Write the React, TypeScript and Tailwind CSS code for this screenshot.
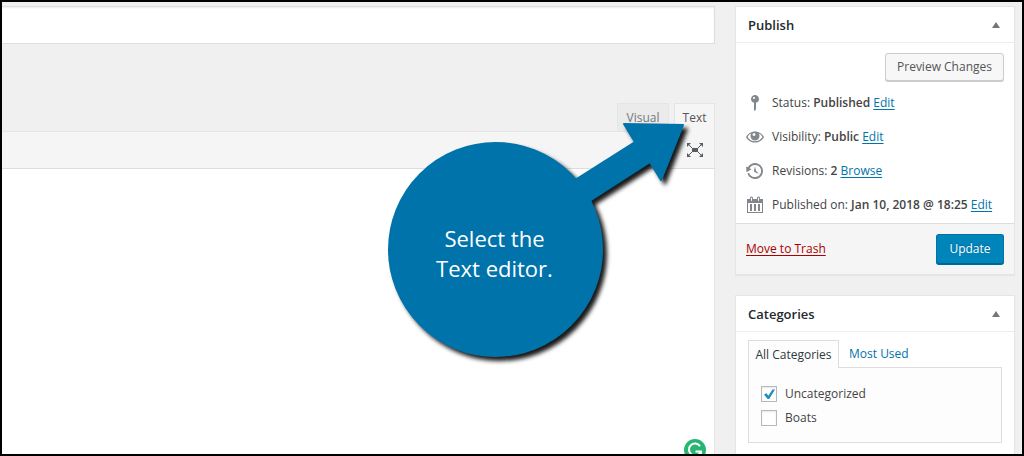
import { useState, type ReactNode } from "react";

const ICONS = {
  pin: "M14 6c0 1.86-1.28 3.41-3 3.86V16c0 1-2 2-2 2V9.86c-1.72-.45-3-2-3-3.86 0-2.21 1.79-4 4-4s4 1.79 4 4zM8 5c0 .55.45 1 1 1s1-.45 1-1-.45-1-1-1-1 .45-1 1z",
  eye: "M10 4.4C6 4.4 2.8 6.7 1 10c1.8 3.3 5 5.6 9 5.6s7.2-2.3 9-5.6C17.2 6.7 14 4.4 10 4.4zM10 14.3c-3.1 0-5.8-1.6-7.4-4.3C3.5 8.4 4.5 7.3 6 6.600A4.500 4.500 0 0 0 5.500 9a4.500 4.500 0 0 0 9 0c0-.9-.2-1.700-.6-2.400C15.500 7.300 16.500 8.400 17.400 10c-1.600 2.700-4.300 4.300-7.400 4.300zM9 6.200c.9 0 1.500.6 1.500 1.400S9.900 9 9 9s-1.500-.6-1.500-1.400S8.100 6.200 9 6.200z",
  history:
    "M13.65 2.88c3.93 2.01 5.48 6.84 3.47 10.77s-6.83 5.48-10.77 3.47c-1.87-.96-3.2-2.56-3.86-4.4l1.64-1.03c.45 1.57 1.52 2.95 3.08 3.76 3.01 1.54 6.69.35 8.23-2.66 1.55-3.01.36-6.69-2.65-8.24C9.78 3.01 6.1 4.2 4.56 7.21l1.88.97-4.95 3.08-.39-5.82 1.78.91C4.9 2.4 9.75.89 13.65 2.88zm-4.36 7.83C9.11 10.53 9 10.28 9 10c0-.07.03-.12.04-.19h-.01L10 5l.97 4.81L14 13l-4.5-2.12.02-.02c-.08-.04-.16-.09-.23-.15z",
  calendar:
    "M15 4h3v14H2V4h3V3c0-.83.67-1.5 1.5-1.5S8 2.17 8 3v1h4V3c0-.83.67-1.5 1.5-1.5S15 2.17 15 3v1zM6 3v2.5c0 .28.22.5.5.5s.5-.22.5-.5V3c0-.28-.22-.5-.5-.5S6 2.72 6 3zm7 0v2.5c0 .28.22.5.5.5s.5-.22.5-.5V3c0-.28-.22-.5-.5-.5s-.5.22-.5.5zm4 14V8H3v9h14zM7 16V9H5v7h2zm4 0V9H9v7h2zm4 0V9h-2v7h2z",
};

function MetaRow({
  icon,
  label,
  value,
  action,
}: {
  icon: keyof typeof ICONS;
  label: string;
  value: string;
  action: string;
}) {
  return (
    <li className="flex h-[34px] items-center gap-[7px] pl-[9px] whitespace-nowrap">
      <svg viewBox="0 0 20 20" className="size-5 shrink-0 fill-[#82878c]" fillRule="evenodd" aria-hidden="true">
        <path d={ICONS[icon]} />
      </svg>
      <span>
        {label} <b className="font-semibold">{value}</b>{" "}
        <a href="#" className="text-[#0073aa] underline underline-offset-2">
          {action}
        </a>
      </span>
    </li>
  );
}

function Panel({ title, children }: { title: string; children: ReactNode }) {
  return (
    <section className="border border-[#e5e5e5] bg-white shadow-[0_1px_1px_rgba(0,0,0,0.04)]">
      <header className="flex h-9 items-center justify-between border-b border-[#eee] pr-[14px] pl-3">
        <h2 className="text-[13px] leading-5 font-semibold text-[#23282d]">{title}</h2>
        <button type="button" aria-label={`Toggle panel: ${title}`}>
          <svg viewBox="0 0 8 6" className="h-[6px] w-2 fill-[#72777c]" aria-hidden="true">
            <path d="M4 0 8 6H0z" />
          </svg>
        </button>
      </header>
      {children}
    </section>
  );
}

function Category({ name, initial }: { name: string; initial: boolean }) {
  const [checked, setChecked] = useState(initial);
  return (
    <label className="flex h-6 items-center gap-2">
      <span className="grid size-4">
        <input
          type="checkbox"
          checked={checked}
          onChange={() => setChecked(!checked)}
          className="col-start-1 row-start-1 size-4 appearance-none border border-[#b4b9be] bg-white shadow-[inset_0_1px_2px_rgba(0,0,0,0.1)]"
        />
        {checked && (
          <svg
            viewBox="0 0 16 16"
            className="pointer-events-none z-10 col-start-1 row-start-1 size-4 fill-[#1e8cbe]"
            aria-hidden="true"
          >
            <path d="M3 8.500 5.500 7.300l1.800 2.400L11.500 3.500h2.500L8.200 13H6.600z" />
          </svg>
        )}
      </span>
      {name}
    </label>
  );
}

function Callout() {
  return (
    <div className="pointer-events-none absolute top-[109px] right-[15px] z-20 h-[255px] w-80">
      <svg viewBox="0 0 320 255" className="h-full w-full overflow-visible" aria-hidden="true">
        <g
          className="fill-[#0073aa] stroke-[#0073aa] drop-shadow-[4px_4px_2px_rgba(0,0,0,0.9)]"
          strokeWidth="2"
          strokeLinejoin="round"
        >
          <circle cx="115.500" cy="134.500" r="106.500" />
          <path d="M185 72 195 65 255 27 244 9 303 10 281 65 270 47 211 85 198 100z" />
        </g>
      </svg>
      <p className="absolute top-[108px] left-0 w-[229px] text-center text-[22px] leading-[30px] text-white">
        Select the
        <br />
        Text editor.
      </p>
    </div>
  );
}

function Editor() {
  return (
    <main className="relative flex min-w-0 flex-1 flex-col">
      <input
        type="text"
        aria-label="Post title"
        className="h-[38px] w-full border border-l-0 border-[#ddd] bg-white px-2 shadow-[inset_0_1px_2px_rgba(0,0,0,0.07)]"
      />
      <div role="tablist" aria-label="Editor mode" className="mt-[59px] flex justify-end gap-[5px]">
        <button
          type="button"
          role="tab"
          aria-selected="false"
          className="h-7 w-[52px] border border-b-0 border-[#e5e5e5] bg-[#ebebeb] text-[#777]"
        >
          Visual
        </button>
        <button
          type="button"
          role="tab"
          aria-selected="true"
          className="z-10 -mb-px h-[29px] w-[41px] border border-b-0 border-[#e5e5e5] bg-[#f5f5f5] text-[#555]"
        >
          Text
        </button>
      </div>
      <div className="flex h-[38px] items-center justify-end border-y border-r border-t-[#e5e5e5] border-r-[#e5e5e5] border-b-[#ddd] bg-[#f5f5f5] pr-[11px]">
        <button type="button" aria-label="Distraction-free writing mode">
          <svg viewBox="0 0 16 14" className="h-[14px] w-4 fill-[#555d66] stroke-[#555d66]" aria-hidden="true">
            <path d="M5 5h6v4H5z" stroke="none" />
            <path d="M0 0h4L0 4zM16 0h-4l4 4zM0 14h4l-4-4zM16 14h-4l4-4z" stroke="none" />
            <path d="m1 1 4 4M15 1l-4 4M1 13l4-4M15 13l-4-4" />
          </svg>
        </button>
      </div>
      <textarea
        aria-label="Post content"
        className="block min-h-0 w-full flex-1 resize-none border-r border-[#e5e5e5] bg-white p-2 outline-none"
      />
      <svg viewBox="0 0 22 22" className="absolute right-[9px] -bottom-[7px] size-[22px]" role="img" aria-label="Grammarly">
        <circle cx="11" cy="11" r="11" className="fill-[#28b572]" />
        <path d="M16 7.200A6 6 0 1 0 16.500 13" fill="none" stroke="#fff" strokeWidth="2" />
        <path d="M11.500 12.500H17V17" fill="none" stroke="#fff" strokeWidth="2" />
      </svg>
      <Callout />
    </main>
  );
}

export default function App() {
  return (
    <div className="flex h-screen gap-5 overflow-hidden border-2 border-black bg-[#f0f0f0] pt-1 pr-[7px] font-['Open_Sans','Noto_Sans',sans-serif] text-[12px] text-[#444]">
      <Editor />
      <aside className="flex w-[280px] shrink-0 flex-col gap-5">
        <Panel title="Publish">
          <div className="flex justify-end px-[10px] pt-[10px]">
            <button
              type="button"
              className="h-7 w-[119px] rounded-[3px] border border-[#ccc] bg-[#f7f7f7] text-[#555] shadow-[0_1px_0_#ccc]"
            >
              Preview Changes
            </button>
          </div>
          <ul className="pt-[5px] pb-px">
            <MetaRow icon="pin" label="Status:" value="Published" action="Edit" />
            <MetaRow icon="eye" label="Visibility:" value="Public" action="Edit" />
            <MetaRow icon="history" label="Revisions:" value="2" action="Browse" />
            <MetaRow icon="calendar" label="Published on:" value="Jan 10, 2018 @ 18:25" action="Edit" />
          </ul>
          <footer className="flex items-center justify-between border-t border-[#ddd] bg-[#f5f5f5] p-[10px]">
            <a href="#" className="text-[#a00] underline underline-offset-2">
              Move to Trash
            </a>
            <button
              type="button"
              className="h-[30px] w-[68px] rounded-[3px] border border-[#0073aa] border-b-[#006799] bg-[#0085ba] text-white shadow-[0_1px_0_#006799] text-shadow-[0_-1px_1px_#006799]"
            >
              Update
            </button>
          </footer>
        </Panel>
        <Panel title="Categories">
          <div className="px-3 pt-2 pb-3">
            <div role="tablist" aria-label="Category lists" className="flex">
              <button
                type="button"
                role="tab"
                aria-selected="true"
                className="z-10 -mb-px h-7 w-[91px] border border-b-0 border-[#ddd] bg-[#fdfdfd] text-[#32373c]"
              >
                All Categories
              </button>
              <button type="button" role="tab" aria-selected="false" className="px-[10px] text-[#0073aa]">
                Most Used
              </button>
            </div>
            <div className="border border-[#ddd] bg-[#fdfdfd] px-3 pt-[14px] pb-3">
              <Category name="Uncategorized" initial={true} />
              <Category name="Boats" initial={false} />
            </div>
          </div>
        </Panel>
      </aside>
    </div>
  );
}
